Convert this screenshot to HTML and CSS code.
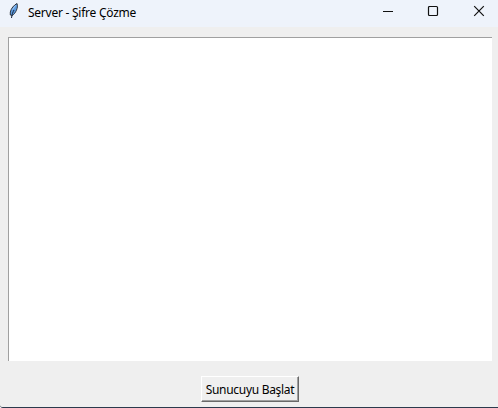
FILE: index.html
```
<!DOCTYPE html>
<html lang="tr">
<head>
<meta charset="utf-8">
<title>Server - Şifre Çözme</title>
<link rel="stylesheet" href="styles.css">
</head>
<body>
<div class="window">
  <header class="titlebar">
    <svg class="feather" width="12" height="18" viewBox="0 0 12 18">
      <path d="M9 1.500C6 3 3 6.500 2.300 10L2.300 13L4.500 13.500C7.500 11 10.500 6 9 1.500Z" fill="#5c9be0" stroke="#30363f" stroke-width="1"/>
      <path d="M6 8C4.800 10 4 12.500 3.500 16" fill="none" stroke="#16243a" stroke-width="1"/>
      <path d="M7.500 3.500L4.500 7.500" stroke="#a9cdf4" stroke-width="1"/>
    </svg>
    <span class="title">Server - Şifre Çözme</span>
    <div class="controls">
      <svg width="12" height="12" viewBox="0 0 12 12"><path d="M1 6.500H11"/></svg>
      <svg width="12" height="12" viewBox="0 0 12 12"><rect x="1.500" y="1.500" width="9" height="9" rx="1"/></svg>
      <svg width="12" height="12" viewBox="0 0 12 12"><path d="M1.200 1.200L10.800 10.800M10.800 1.200L1.200 10.800"/></svg>
    </div>
  </header>
  <main class="content">
    <div class="log"></div>
    <button class="start">Sunucuyu Başlat</button>
  </main>
</div>
</body>
</html>
```
FILE: styles.css
```
body {
  margin: 0;
  font: 12px/20px "Noto Sans", "Open Sans", sans-serif;
  color: #000;
}
.window {
  box-sizing: border-box;
  height: 408px;
  display: flex;
  flex-direction: column;
  background: #efefef;
  border-bottom: 1px solid #2c3a4c;
  border-bottom-left-radius: 3px;
  overflow: hidden;
}
.titlebar {
  height: 27px;
  display: flex;
  align-items: flex-start;
  background: #eef3fb;
}
.feather {
  margin: 2px 0 0 8px;
}
.title {
  margin: 3px 0 0 8px;
  letter-spacing: -0.25px;
  white-space: nowrap;
}
svg {
  display: block;
}
.controls {
  display: flex;
  gap: 34px;
  margin: 5px 13px 0 auto;
}
.controls svg {
  fill: none;
  stroke: #111;
  stroke-width: 1.2;
}
.controls svg:first-child {
  margin-right: -1px;
}
.content {
  flex: 1;
  display: flex;
  flex-direction: column;
  align-items: center;
  padding: 10px 6px 0 8px;
}
.log {
  box-sizing: border-box;
  width: 100%;
  height: 324px;
  background: #fff;
  border-top: 1px solid #a0a0a0;
  border-left: 1px solid #a0a0a0;
}
.start {
  box-sizing: border-box;
  width: 98px;
  height: 26px;
  margin-top: 15px;
  padding: 2px 0 0;
  background: #efefef;
  border: 1px solid #fff;
  border-right: 1px solid #696969;
  border-bottom: 1px solid #696969;
  box-shadow: inset -1px -1px #a0a0a0;
  font: inherit;
  letter-spacing: -0.3px;
  white-space: nowrap;
  color: #000;
}
```
